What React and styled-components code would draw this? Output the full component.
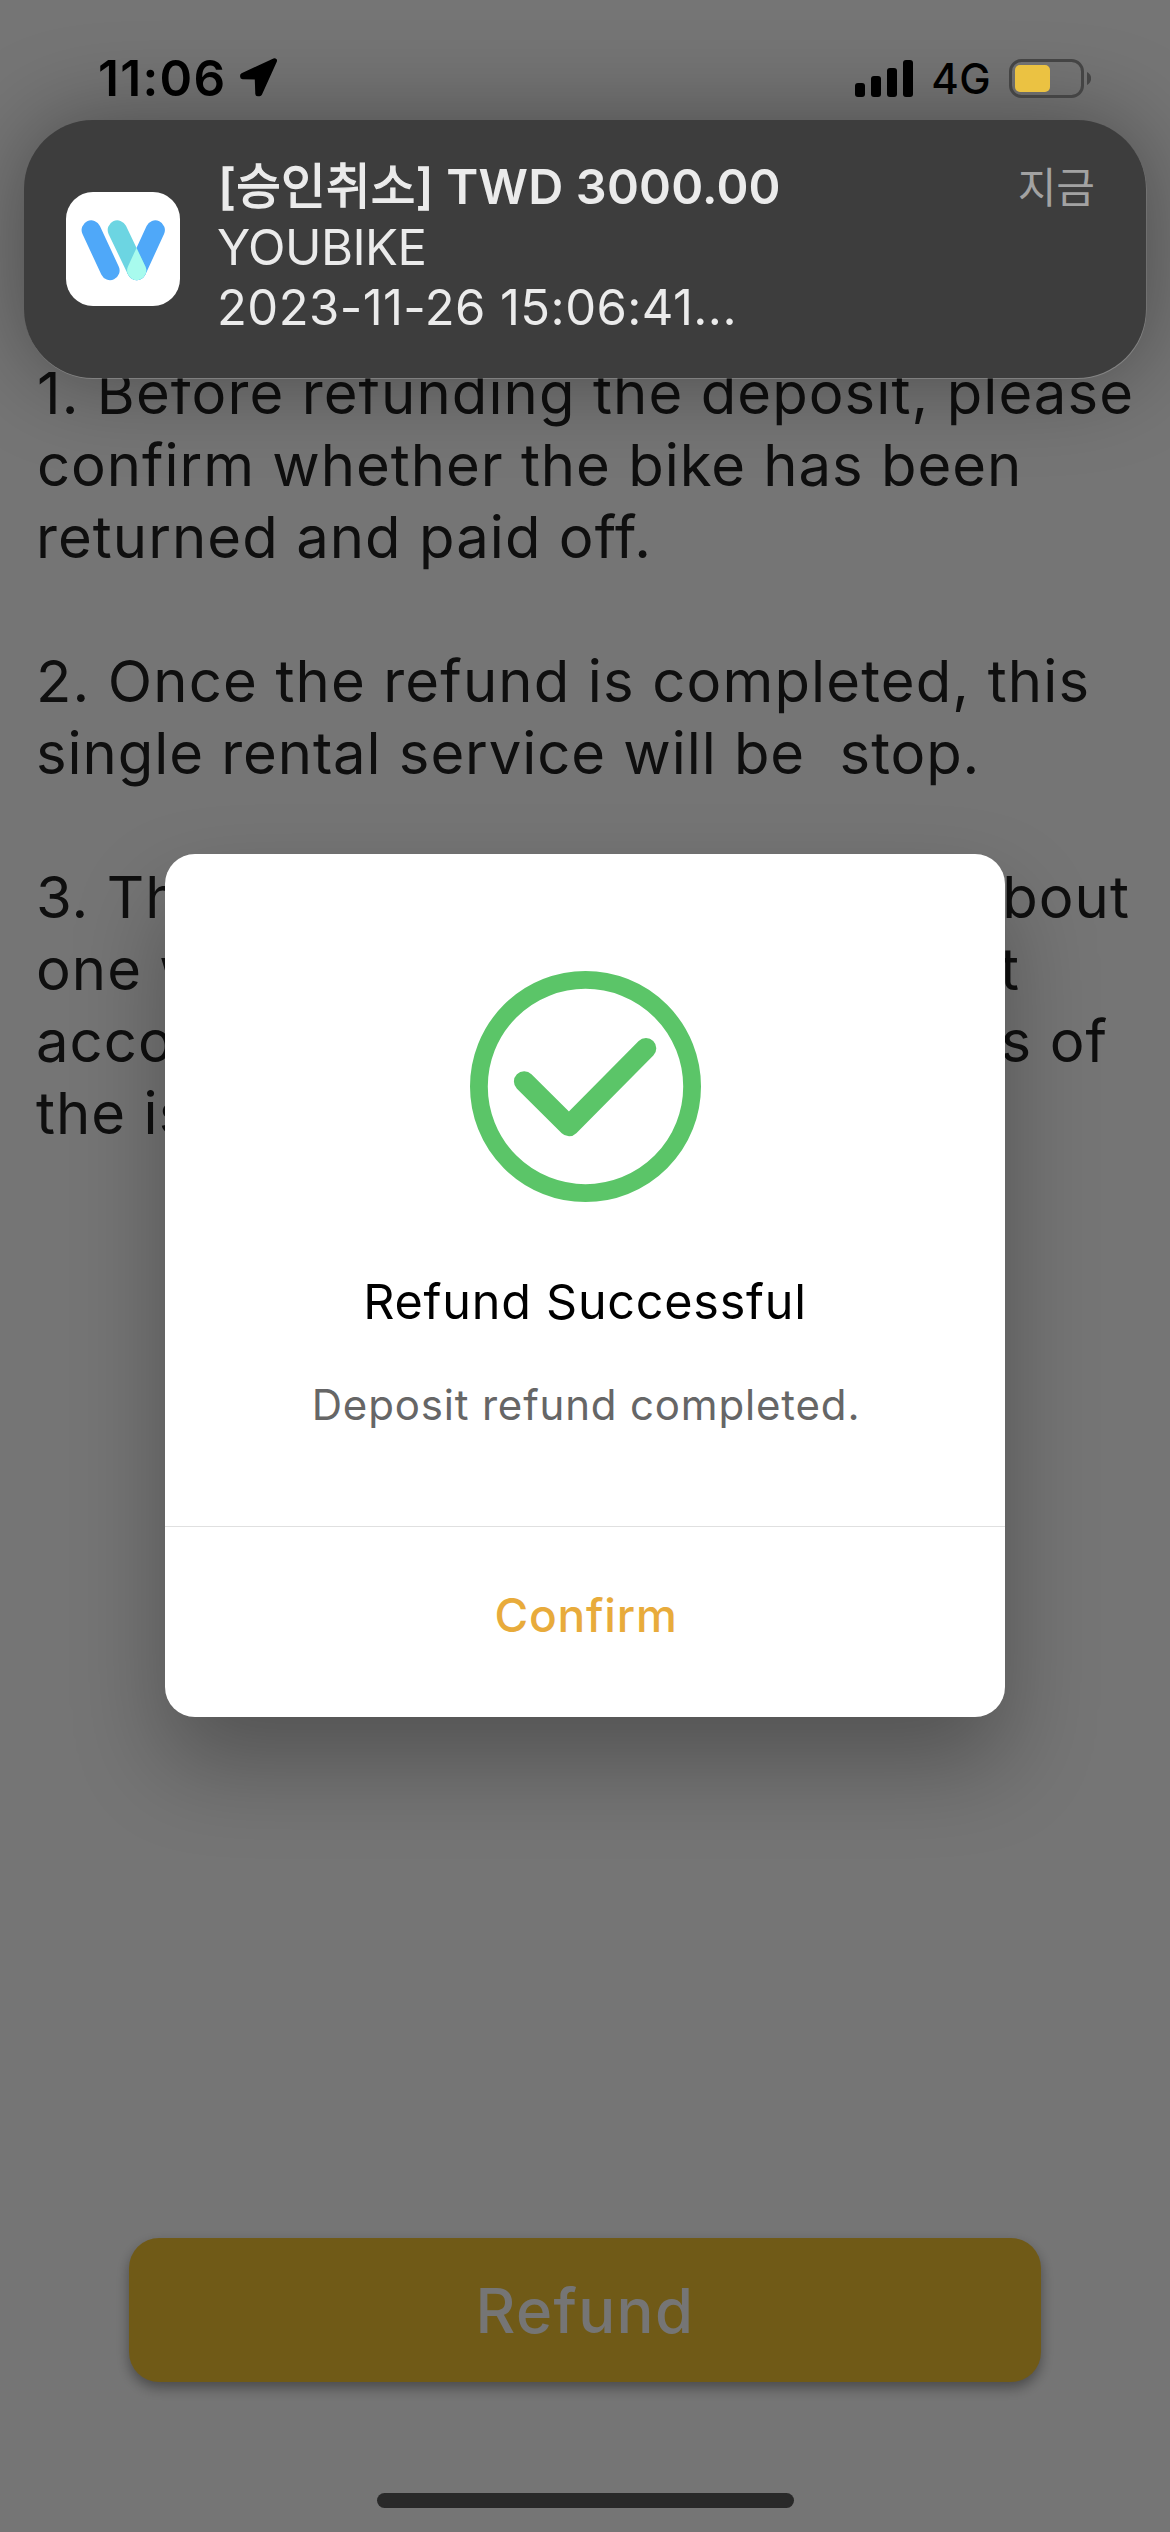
import React from "react";
import styled, { createGlobalStyle } from "styled-components";

const GlobalStyle = createGlobalStyle`
  *, *::before, *::after { box-sizing: border-box; }
  html, body { margin: 0; padding: 0; background: #757575; }
  body { font-family: Inter, "Noto Sans CJK KR", "Noto Sans", sans-serif; }
  p, h1, h2 { margin: 0; font-weight: 400; }
  svg { display: block; flex: none; }
`;

const Screen = styled.div`
  position: relative;
  width: 1170px;
  height: 2532px;
  overflow: hidden;
  background: #fff;
`;

/* Page under the dialog */
const Page = styled.main`
  display: flex;
  flex-direction: column;
  justify-content: space-between;
  height: 100%;
  padding: 357px 0 150px;
`;

const Terms = styled.section`
  display: flex;
  flex-direction: column;
  gap: 72px;
  padding: 0 36px;
`;

const Term = styled.div`
  color: #212121;
  font-size: 58px;
  line-height: 72px;
`;

const TermLine = styled.p`
  display: flex;
  justify-content: space-between;
  width: ${({ $width }) => ($width ? `${$width}px` : "auto")};
  letter-spacing: ${({ $tracking = 1.05 }) => $tracking}px;
  padding-left: ${({ $indent = 0 }) => $indent}px;
  white-space: pre;
`;

const RefundButton = styled.button`
  align-self: center;
  width: 912px;
  height: 144px;
  padding: 1px 0 0;
  border: 0;
  border-radius: 30px;
  background: #f4c434;
  box-shadow: 0 6px 13px rgba(0, 0, 0, 0.36);
  color: #fff;
  font: 500 61.5px/72px Inter, sans-serif;
  letter-spacing: 1.4px;
`;

/* Dialog */
const Scrim = styled.div`
  position: absolute;
  inset: 0;
  display: flex;
  align-items: center;
  justify-content: center;
  padding-top: 39px;
  background: rgba(0, 0, 0, 0.54);
`;

const Dialog = styled.section`
  display: flex;
  flex-direction: column;
  width: 840px;
  height: 863px;
  border-radius: 30px;
  background: #fff;
  box-shadow: 0 46px 92px rgba(0, 0, 0, 0.29);
  overflow: hidden;
`;

const DialogBody = styled.div`
  display: flex;
  flex-direction: column;
  align-items: center;
  height: 673px;
  padding-top: 117px;
  border-bottom: 1px solid #e0e0e0;
`;

const DialogTitle = styled.h1`
  margin-top: 70px;
  color: #000;
  font-size: 48.5px;
  line-height: 60px;
  letter-spacing: 0.77px;
`;

const DialogMessage = styled.p`
  margin-top: 43px;
  padding-left: 2px;
  color: #666;
  font-size: 42px;
  line-height: 60px;
  letter-spacing: 0.83px;
`;

const ConfirmButton = styled.button`
  flex: 1;
  padding: 0 0 14px 2px;
  border: 0;
  background: none;
  color: #e8ab3b;
  font: 500 46px/60px Inter, sans-serif;
  letter-spacing: 0.8px;
`;

/* System chrome */
const StatusBar = styled.header`
  position: absolute;
  top: 0;
  left: 0;
  right: 0;
  display: flex;
  justify-content: space-between;
  align-items: center;
  height: 156px;
  padding: 0 79px 0 98px;
  color: #000;
`;

const StatusGroup = styled.div`
  display: flex;
  align-items: center;
`;

const Clock = styled.span`
  margin-right: 12px;
  font-size: 49.5px;
  font-weight: 600;
  line-height: 60px;
  letter-spacing: 1.3px;
`;

const Network = styled.span`
  margin: 2px 18px 0 18px;
  font-size: 42px;
  font-weight: 500;
  line-height: 50px;
  letter-spacing: 0.4px;
`;

const Banner = styled.aside`
  position: absolute;
  top: 120px;
  left: 24px;
  right: 24px;
  display: flex;
  align-items: flex-start;
  height: 258px;
  padding: 37px 51px 0 42px;
  border-radius: 69px;
  background: #3d3d3d;
  box-shadow: 0.5px 1px 0 rgba(255, 255, 255, 0.2), 0 0 90px rgba(0, 0, 0, 0.36);
`;

const AppIcon = styled.div`
  flex: none;
  width: 114px;
  height: 114px;
  margin: 35px 37px 0 0;
  border-radius: 27px;
  background: #fff;
`;

const BannerText = styled.div`
  flex: 1;
  color: #ebebeb;
`;

const BannerTitle = styled.h2`
  margin-bottom: 1px;
  padding-left: 1px;
  font-size: 48.5px;
  font-weight: 600;
  line-height: 60px;
  letter-spacing: 0.2px;
`;

const Hangul = styled.span`
  font-weight: 400;
  -webkit-text-stroke: 1.3px currentColor;
`;

const BannerLine = styled.p`
  font-size: 49px;
  line-height: 60px;
  letter-spacing: ${({ $tracking }) => $tracking}px;
`;

const BannerTime = styled.time`
  margin-top: 1px;
  color: #a2a2a2;
  font-size: 42px;
  line-height: 60px;
`;

const HomeIndicator = styled.div`
  position: absolute;
  bottom: 24px;
  left: 377px;
  width: 417px;
  height: 15px;
  border-radius: 8px;
  background: #292929;
`;

const LocationArrow = () => (
  <svg width="42" height="42" viewBox="0 0 42 42">
    <path
      d="M36.5 2.6 L4.6 17.2 L4.6 18.6 L19.2 18.9 L19.8 35.6 L21.6 35.6 Z"
      transform="translate(0 1.2)"
      fill="#000"
      stroke="#000"
      strokeWidth="5"
      strokeLinejoin="round"
    />
  </svg>
);

const SignalBars = () => (
  <svg width="58" height="37" viewBox="0 0 58 37">
    <rect x="0" y="23" width="10" height="14" rx="3" />
    <rect x="16" y="16" width="10" height="21" rx="3" />
    <rect x="32" y="8" width="10" height="29" rx="3" />
    <rect x="48" y="0" width="10" height="37" rx="3" />
  </svg>
);

const Battery = () => (
  <svg width="82" height="39" viewBox="0 0 82 39">
    <rect x="1.5" y="1.5" width="72" height="36" rx="11" fill="none" stroke="#444" strokeWidth="3" />
    <rect x="6" y="6" width="35" height="27" rx="5" fill="#ebc242" />
    <path d="M78 13 C83.5 15.5 83.5 23.5 78 26 Z" fill="#444" />
  </svg>
);

const WLogo = () => (
  <svg width="114" height="114" viewBox="66 192 114 114" strokeWidth="19.2" strokeLinecap="round">
    <defs>
      <clipPath id="teal-stroke">
        <rect x="-9.6" y="-9.6" width="64.2" height="19.2" rx="9.6" transform="translate(117.3 230) rotate(64.46)" />
      </clipPath>
    </defs>
    <path d="M91.2 230 L110 270.5" stroke="#4fa8f9" />
    <path d="M155.3 230 L136.7 270.5" stroke="#4fa8f9" />
    <path d="M117.3 230 L136.7 270.5" stroke="#6cd5e2" />
    <path d="M155.3 230 L136.7 270.5" stroke="#a8fbee" clipPath="url(#teal-stroke)" />
  </svg>
);

const SuccessIcon = () => (
  <svg width="231" height="231" viewBox="0 0 231 231" fill="none" stroke="#5bc568">
    <circle cx="115.5" cy="115.5" r="106.6" strokeWidth="17.8" />
    <path
      d="M54.2 110.5 L99 155 L176 77.2"
      strokeWidth="20.6"
      strokeLinecap="round"
      strokeLinejoin="round"
    />
  </svg>
);

export default function App() {
  return (
    <>
      <GlobalStyle />
      <Screen>
        <Page>
          <Terms>
            <Term>
              <TermLine $tracking={1.08} $indent={1}>1. Before refunding the deposit, please</TermLine>
              <TermLine $tracking={0.97} $indent={1}>confirm whether the bike has been</TermLine>
              <TermLine $tracking={1.06}>returned and paid off.</TermLine>
            </Term>
            <Term>
              <TermLine $tracking={1.14}>2. Once the refund is completed, this</TermLine>
              <TermLine $tracking={0.93}>{"single rental service will be  stop."}</TermLine>
            </Term>
            <Term>
              <TermLine $width={1094}><span>3. The refund</span><span>about</span></TermLine>
              <TermLine $width={984}><span>one week</span><span>different</span></TermLine>
              <TermLine $width={1072}><span>accounting</span><span>days of</span></TermLine>
              <TermLine>the issuing bank.</TermLine>
            </Term>
          </Terms>
          <RefundButton>Refund</RefundButton>
        </Page>

        <Scrim>
          <Dialog>
            <DialogBody>
              <SuccessIcon />
              <DialogTitle>Refund Successful</DialogTitle>
              <DialogMessage>Deposit refund completed.</DialogMessage>
            </DialogBody>
            <ConfirmButton>Confirm</ConfirmButton>
          </Dialog>
        </Scrim>

        <Banner>
          <AppIcon><WLogo /></AppIcon>
          <BannerText>
            <BannerTitle>[<Hangul>승인취소</Hangul>] TWD 3000.00</BannerTitle>
            <BannerLine $tracking={-0.53}>YOUBIKE</BannerLine>
            <BannerLine $tracking={0.43}>2023-11-26 15:06:41...</BannerLine>
          </BannerText>
          <BannerTime>지금</BannerTime>
        </Banner>

        <StatusBar>
          <StatusGroup>
            <Clock>11:06</Clock>
            <LocationArrow />
          </StatusGroup>
          <StatusGroup>
            <SignalBars />
            <Network>4G</Network>
            <Battery />
          </StatusGroup>
        </StatusBar>

        <HomeIndicator />
      </Screen>
    </>
  );
}
